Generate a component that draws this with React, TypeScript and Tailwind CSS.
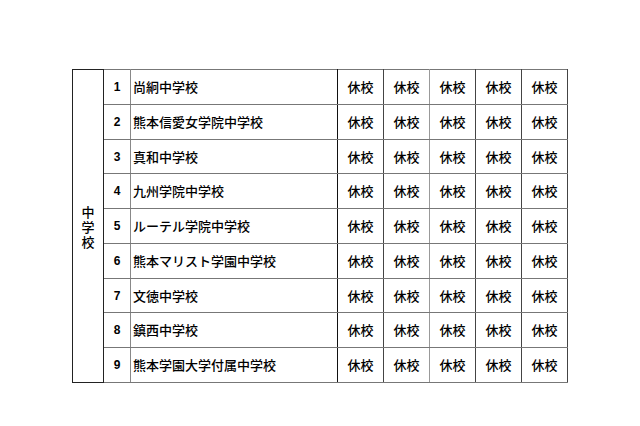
import React from "react";

const schools = [
  "尚絅中学校",
  "熊本信愛女学院中学校",
  "真和中学校",
  "九州学院中学校",
  "ルーテル学院中学校",
  "熊本マリスト学園中学校",
  "文徳中学校",
  "鎮西中学校",
  "熊本学園大学付属中学校",
];

const heights = ["h-[35px]", "h-[35px]", "h-[34px]", "h-[35px]", "h-[35px]", "h-[35px]", "h-[34px]", "h-[35px]", "h-[35px]"];

export default function App() {
  return (
    <div
      className="w-[640px] h-[426px] bg-white text-black"
      style={{ fontFamily: '"Liberation Sans", "Noto Sans CJK JP", sans-serif' }}
    >
      <div className="pt-[69px] pl-[72px]">
        <table className="table-fixed border-collapse border-[1.5px] border-[#111] w-[495px]">
          <colgroup>
            <col className="w-[31px]" />
            <col className="w-[27px]" />
            <col className="w-[207px]" />
            <col className="w-[46px]" />
            <col className="w-[46px]" />
            <col className="w-[46px]" />
            <col className="w-[46px]" />
            <col className="w-[46px]" />
          </colgroup>
          <tbody>
            {schools.map((s, i) => (
              <tr key={i} className={heights[i]}>
                {i === 0 && (
                  <td
                    rowSpan={9}
                    className="border border-[#222] text-center align-middle text-[13px] leading-[13px] font-medium font-['Noto_Sans_CJK_JP']"
                  >
                    <div className="flex flex-col items-center gap-[2px]">
                      <span>中</span>
                      <span>学</span>
                      <span>校</span>
                    </div>
                  </td>
                )}
                <td className="border-y border-y-[#777] border-l border-l-[#222] border-r border-r-[#888] text-center text-[12px] font-bold p-0">
                  {i + 1}
                </td>
                <td className="border-y border-y-[#777] border-r-[1.5px] border-r-[#111] pl-[2px] text-[13px] font-medium font-['Noto_Sans_CJK_JP'] whitespace-nowrap">
                  {s}
                </td>
                {[0, 1, 2, 3, 4].map((j) => (
                  <td
                    key={j}
                    className={`border-y border-y-[#777] border-r text-center text-[13px] font-medium font-['Noto_Sans_CJK_JP'] p-0 ${
                      j === 1 ? "border-r-[#999]" : "border-r-[#444]"
                    }`}
                  >
                    休校
                  </td>
                ))}
              </tr>
            ))}
          </tbody>
        </table>
      </div>
    </div>
  );
}
